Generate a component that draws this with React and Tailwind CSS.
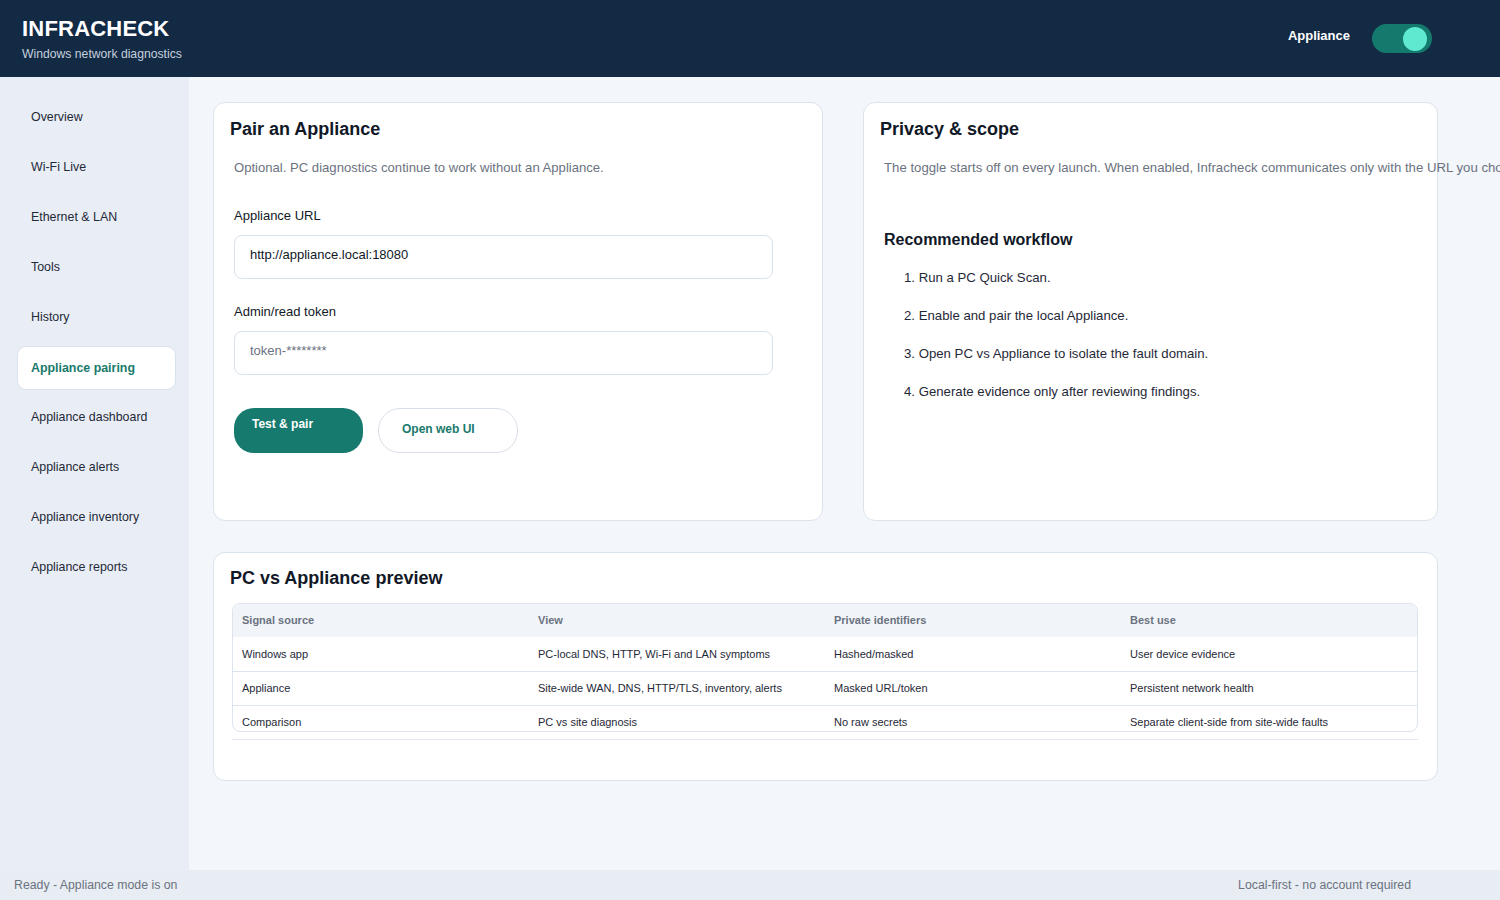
export default function App() {
  const nav = [
    "Overview",
    "Wi-Fi Live",
    "Ethernet & LAN",
    "Tools",
    "History",
    "Appliance pairing",
    "Appliance dashboard",
    "Appliance alerts",
    "Appliance inventory",
    "Appliance reports",
  ];
  const rows = [
    ["Windows app", "PC-local DNS, HTTP, Wi-Fi and LAN symptoms", "Hashed/masked", "User device evidence"],
    ["Appliance", "Site-wide WAN, DNS, HTTP/TLS, inventory, alerts", "Masked URL/token", "Persistent network health"],
    ["Comparison", "PC vs site diagnosis", "No raw secrets", "Separate client-side from site-wide faults"],
  ];
  return (
    <div
      className="w-[1500px] h-[900px] flex flex-col overflow-hidden bg-[#f3f6fa] text-[#111827]"
      style={{ fontFamily: '"Liberation Sans", Arial, sans-serif' }}
    >
      {/* Header */}
      <header className="h-[77px] shrink-0 bg-[#132a45] flex items-center justify-between pl-[22px] pr-[68px]">
        <div className="flex flex-col">
          <div className="text-[22px] leading-[26px] font-bold text-white tracking-[0.2px] mt-[1px]">INFRACHECK</div>
          <div className="text-[12.2px] leading-[16px] text-[#c5d0de] mt-[4px]">Windows network diagnostics</div>
        </div>
        <div className="flex items-center gap-[22px]">
          <span className="text-[13px] font-bold text-white mb-[5px]">Appliance</span>
          <div className="w-[60px] h-[29px] rounded-full bg-[#157a6e] flex items-center justify-end pr-[5px]">
            <div className="w-[24px] h-[24px] rounded-full bg-[#5fe9d1]"></div>
          </div>
        </div>
      </header>

      <div className="flex flex-1 min-h-0">
        {/* Sidebar */}
        <aside className="w-[189px] shrink-0 bg-[#e9eef6] pt-[19px] pl-[17px] pr-[13px]">
          {nav.map((n) =>
            n === "Appliance pairing" ? (
              <div
                key={n}
                className="h-[44px] mb-[6px] px-[13px] flex items-center rounded-[9px] bg-white border border-[#d8e1ec] text-[12.4px] font-bold text-[#197a6b]"
              >
                {n}
              </div>
            ) : (
              <div key={n} className="h-[43px] mb-[7px] px-[14px] flex items-center text-[12.4px] text-[#1f2937]">
                {n}
              </div>
            )
          )}
        </aside>

        {/* Main */}
        <main className="flex-1 min-w-0 pl-[24px] pt-[25px] overflow-visible">
          <div className="flex gap-[40px]">
            {/* Card 1 */}
            <section className="w-[610px] h-[419px] bg-white border border-[#dbe3ed] rounded-[12px] pt-[14px] px-[16px]">
              <h2 className="text-[18px] leading-[24px] font-bold text-[#111827]">Pair an Appliance</h2>
              <div className="pl-[4px]">
                <p className="mt-[17px] text-[13.1px] leading-[20px] text-[#6b7280]">
                  Optional. PC diagnostics continue to work without an Appliance.
                </p>
                <div className="mt-[28px] text-[13px] leading-[20px] text-[#111827]">Appliance URL</div>
                <div className="mt-[9px] w-[539px] h-[44px] rounded-[8px] border border-[#d8e1ec] flex items-center pl-[15px] pb-[4px] text-[13px] text-[#111827]">
                  http://appliance.local:18080
                </div>
                <div className="mt-[23px] text-[13px] leading-[20px] text-[#111827]">Admin/read token</div>
                <div className="mt-[9px] w-[539px] h-[44px] rounded-[8px] border border-[#d8e1ec] flex items-center pl-[15px] pb-[4px] text-[13px] text-[#6b7280]">
                  token-********
                </div>
                <div className="mt-[33px] flex gap-[15px]">
                  <button className="w-[129px] h-[45px] rounded-[20px] bg-[#167a6e] text-white text-[12px] font-bold text-left pl-[18px] pt-[7px] flex items-start">
                    Test &amp; pair
                  </button>
                  <button className="w-[140px] h-[45px] rounded-[22px] bg-white border border-[#d8dee8] text-[#197a6b] text-[12px] font-bold text-left pl-[23px] pt-[11px] flex items-start">
                    Open web UI
                  </button>
                </div>
              </div>
            </section>

            {/* Card 2 */}
            <section className="w-[575px] h-[419px] bg-white border border-[#dbe3ed] rounded-[12px] pt-[14px] px-[16px] overflow-visible">
              <h2 className="text-[18px] leading-[24px] font-bold text-[#111827]">Privacy &amp; scope</h2>
              <div className="pl-[4px]">
                <p className="mt-[17px] text-[13.2px] leading-[20px] text-[#6b7280] whitespace-nowrap">
                  The toggle starts off on every launch. When enabled, Infracheck communicates only with the URL you choose and only while the toggle is on.
                </p>
                <h3 className="mt-[51px] text-[16px] leading-[22px] font-bold text-[#111827]">Recommended workflow</h3>
                <ol className="mt-[18px] pl-[20px] text-[13.2px] leading-[18px] text-[#1f2937]">
                  <li className="h-[38px]">1. Run a PC Quick Scan.</li>
                  <li className="h-[38px]">2. Enable and pair the local Appliance.</li>
                  <li className="h-[38px]">3. Open PC vs Appliance to isolate the fault domain.</li>
                  <li className="h-[38px]">4. Generate evidence only after reviewing findings.</li>
                </ol>
              </div>
            </section>
          </div>

          {/* Card 3 */}
          <section className="mt-[31px] w-[1225px] h-[229px] bg-white border border-[#dbe3ed] rounded-[12px] pt-[13px] pl-[16px] pr-[19px]">
            <h2 className="text-[18px] leading-[24px] font-bold text-[#111827]">PC vs Appliance preview</h2>
            <div className="mt-[13px] ml-[2px] h-[129px] border border-[#dde4ee] rounded-[8px] overflow-hidden">
              <div className="grid grid-cols-4 h-[33px] bg-[#f1f5f9] items-center text-[11px] font-bold text-[#6b7280]">
                <div className="pl-[9px]">Signal source</div>
                <div className="pl-[9px]">View</div>
                <div className="pl-[9px]">Private identifiers</div>
                <div className="pl-[9px]">Best use</div>
              </div>
              {rows.map((r, i) => (
                <div
                  key={i}
                  className={`grid grid-cols-4 h-[34px] items-center text-[11px] text-[#1f2937] ${i > 0 ? "border-t border-[#dde4ee]" : ""}`}
                >
                  {r.map((c, j) => (
                    <div key={j} className="pl-[9px]">{c}</div>
                  ))}
                </div>
              ))}
            </div>
            <div className="mt-[7px] ml-[2px] h-px bg-[#e2e8f0]"></div>
          </section>
        </main>
      </div>

      {/* Status bar */}
      <footer className="h-[30px] shrink-0 bg-[#e8edf4] flex items-center justify-between pl-[14px] pr-[89px] text-[12.3px] text-[#6b7280]">
        <span>Ready - Appliance mode is on</span>
        <span>Local-first - no account required</span>
      </footer>
    </div>
  );
}
